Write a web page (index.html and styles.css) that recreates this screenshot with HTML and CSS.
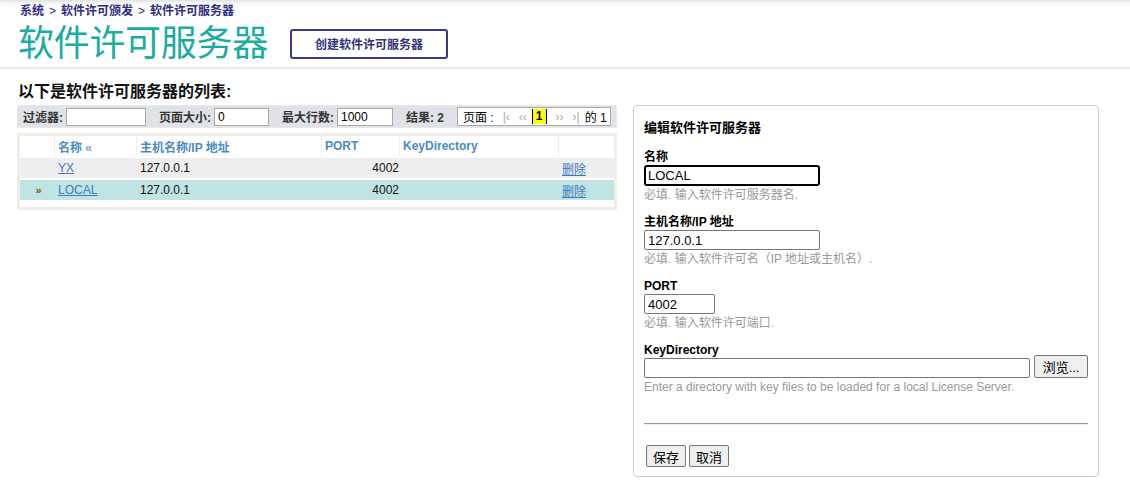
FILE: index.html
```html
<!DOCTYPE html>
<html lang="zh">
<head>
<meta charset="utf-8">
<title>软件许可服务器</title>
<link rel="stylesheet" href="styles.css">
</head>
<body>
<header class="page-header">
  <nav class="crumbs">
    <a href="#">系统</a><span class="sep">&gt;</span><a href="#">软件许可颁发</a><span class="sep">&gt;</span><a href="#">软件许可服务器</a>
  </nav>
  <div class="title-row">
    <h1 class="title">软件许可服务器</h1>
    <button class="create-btn" type="button">创建软件许可服务器</button>
  </div>
</header>

<h2 class="list-title">以下是软件许可服务器的列表:</h2>

<main class="main">
  <section class="list-col">
    <div class="toolbar">
      <label class="tb-label">过滤器:</label><input class="tb-input w80" type="text" value="">
      <label class="tb-label gap">页面大小:</label><input class="tb-input w55" type="text" value="0">
      <label class="tb-label gap">最大行数:</label><input class="tb-input w56" type="text" value="1000">
      <span class="tb-label gap">结果: 2</span>
      <div class="pager">
        <span class="pg-text">页面 :</span>
        <span class="pg-arrow">|‹</span>
        <span class="pg-arrow">‹‹</span>
        <span class="pg-current">1</span>
        <span class="pg-arrow">››</span>
        <span class="pg-arrow">›|</span>
        <span class="pg-text">的 1</span>
      </div>
    </div>

    <div class="table-wrap">
      <table class="grid">
        <colgroup>
          <col class="c-mark"><col class="c-name"><col class="c-host"><col class="c-port"><col class="c-key"><col class="c-del">
        </colgroup>
        <thead>
          <tr>
            <th></th>
            <th>名称 <span class="sort">«</span></th>
            <th>主机名称/IP 地址</th>
            <th>PORT</th>
            <th>KeyDirectory</th>
            <th></th>
          </tr>
        </thead>
        <tbody>
          <tr class="row">
            <td></td>
            <td><a href="#">YX</a></td>
            <td>127.0.0.1</td>
            <td class="num">4002</td>
            <td></td>
            <td><a href="#">删除</a></td>
          </tr>
          <tr class="row selected">
            <td class="mark">»</td>
            <td><a href="#">LOCAL</a></td>
            <td>127.0.0.1</td>
            <td class="num">4002</td>
            <td></td>
            <td><a href="#">删除</a></td>
          </tr>
        </tbody>
      </table>
    </div>
  </section>

  <aside class="panel">
    <h3 class="panel-title">编辑软件许可服务器</h3>

    <div class="field">
      <label class="f-label">名称</label>
      <div class="f-row"><input class="f-input w176 focused" type="text" value="LOCAL"></div>
      <div class="help">必填. 输入软件许可服务器名.</div>
    </div>

    <div class="field">
      <label class="f-label">主机名称/IP 地址</label>
      <div class="f-row"><input class="f-input w176" type="text" value="127.0.0.1"></div>
      <div class="help">必填. 输入软件许可名（IP 地址或主机名）.</div>
    </div>

    <div class="field">
      <label class="f-label">PORT</label>
      <div class="f-row"><input class="f-input w71" type="text" value="4002"></div>
      <div class="help">必填. 输入软件许可端口.</div>
    </div>

    <div class="field">
      <label class="f-label">KeyDirectory</label>
      <div class="f-row"><input class="f-input w386" type="text" value=""><button class="btn browse" type="button">浏览...</button></div>
      <div class="help">Enter a directory with key files to be loaded for a local License Server.</div>
    </div>

    <hr class="divider">

    <div class="actions">
      <button class="btn" type="button">保存</button><button class="btn" type="button">取消</button>
    </div>
  </aside>
</main>
</body>
</html>
```

FILE: styles.css
```css
* { box-sizing: border-box; }

html, body {
  margin: 0;
  padding: 0;
  background: #fff;
  color: #000;
  font-family: "Liberation Sans", Arial, "Noto Sans CJK SC", sans-serif;
  font-size: 12px;
}

.page-header {
  background: linear-gradient(#e2e2e2 0, #f6f6f6 3px, #fff 7px);
  border-bottom: 2px solid #ebebeb;
  padding: 4px 0 0 18px;
  height: 69px;
}

.crumbs {
  padding-left: 2px;
  line-height: 15px;
  font-size: 12px;
  font-weight: bold;
}
.crumbs a { color: #2e2e82; text-decoration: none; }
.crumbs .sep { color: #2e2e82; padding: 0 5px; font-weight: normal; }

.title-row {
  display: flex;
  align-items: center;
  margin-top: 4px;
}

.title {
  margin: 0;
  font-size: 36px;
  font-weight: normal;
  line-height: 42px;
  color: #19aca2;
  letter-spacing: -0.3px;
}

.create-btn {
  margin-left: 22px;
  margin-top: -1px;
  width: 158px;
  height: 30px;
  background: #fff;
  border: 2px solid #3a3a8e;
  border-radius: 3px;
  color: #33337a;
  font-family: inherit;
  font-size: 12px;
  font-weight: bold;
  padding: 0;
}

.list-title {
  margin: 13px 0 0 18px;
  font-size: 16px;
  line-height: 20px;
  font-weight: bold;
  color: #111;
}

.main {
  display: flex;
  align-items: flex-start;
  gap: 16px;
  padding-left: 17px;
  margin-top: 3px;
}

.list-col { width: 600px; }

.toolbar {
  display: flex;
  align-items: center;
  height: 23px;
  background: #dfe2e6;
  border: 1px solid #e6e8eb;
  border-radius: 2px;
  padding-left: 5px;
}

.tb-label {
  font-weight: bold;
  color: #333;
  font-size: 12px;
}
.tb-label.gap { margin-left: 13px; }

.tb-input {
  height: 18px;
  border: 1px solid #a9a9a9;
  background: #fff;
  font-family: inherit;
  font-size: 12px;
  padding: 0 3px;
  margin-left: 3px;
}
.w80 { width: 80px; }
.w55 { width: 55px; }
.w56 { width: 56px; }

.pager {
  display: flex;
  align-items: center;
  height: 19px;
  margin-left: 13px;
  background: #fff;
  border: 1px solid #a9a9a9;
  padding: 0 3px 0 5px;
  font-size: 12px;
}
.pg-text { color: #000; }
.pg-arrow {
  color: #aaa;
  font-size: 12px;
  margin-left: 9px;
}
.pg-current {
  margin-left: 5px;
  background: #ffff00;
  border-left: 1px solid #000;
  border-right: 1px solid #000;
  font-weight: bold;
  padding: 0 3px;
  line-height: 15px;
}
.pg-text:last-child { margin-left: 5px; }

.table-wrap {
  margin-top: 5px;
  border: 3px solid #eeeee6;
  padding: 0 0 5px 0;
}

.grid {
  width: 100%;
  border-collapse: separate;
  border-spacing: 0 2px;
  table-layout: fixed;
  margin-top: -2px;
}
.c-mark { width: 35px; }
.c-name { width: 82px; }
.c-host { width: 185px; }
.c-port { width: 78px; }
.c-key { width: 159px; }
.c-del { width: 55px; }

.grid th {
  text-align: left;
  font-weight: bold;
  color: #4a8ac7;
  height: 20px;
  padding: 0 3px;
  border-right: 1px solid #ececec;
  background: #fff;
}
.grid th:last-child { border-right: 0; }
.grid th .sort { font-weight: normal; }

.grid td {
  height: 20px;
  padding: 0 3px;
  color: #111;
}
.grid .row td { background: #eeeeee; }
.grid .row.selected td { background: #c0e4e4; }
.grid td.num { text-align: right; padding-right: 1px; }
.grid td.mark {
  text-align: center;
  color: #7a5a00;
  font-weight: bold;
  font-size: 11px;
  padding-left: 5px;
}
.grid a { color: #3d7cc0; text-decoration: underline; }

.panel {
  width: 466px;
  height: 372px;
  border: 1px solid #cccccc;
  border-radius: 4px;
  padding: 12px 10px 0 10px;
}

.panel-title {
  margin: 0;
  font-size: 13px;
  line-height: 20px;
  font-weight: bold;
}

.field { margin-top: 11px; }

.f-label {
  display: block;
  font-weight: bold;
  font-size: 12px;
  line-height: 16px;
  color: #000;
}

.f-row {
  display: flex;
  align-items: center;
}

.f-input {
  height: 20px;
  border: 1px solid #767676;
  border-radius: 2px;
  font-family: inherit;
  font-size: 13px;
  padding: 0 3px;
  background: #fff;
  color: #000;
}
.f-input.focused {
  border: 2px solid #000;
  height: 21px;
  padding: 0 2px;
  border-radius: 3px;
}
.w176 { width: 176px; }
.w71 { width: 71px; }
.w386 { width: 387px; }

.help {
  color: #999;
  font-size: 12px;
  line-height: 16px;
  margin-top: 1px;
}

.btn {
  height: 22px;
  border: 1px solid #767676;
  border-radius: 2px;
  background: #efefef;
  font-family: inherit;
  font-size: 13px;
  color: #000;
  padding: 0 6px;
}
.browse {
  margin-left: 4px;
  height: 23px;
  margin-top: -3px;
  width: 54px;
}

.divider {
  margin: 28px 0 0 0;
  border: 0;
  border-top: 1px solid #999;
  border-bottom: 1px solid #eee;
}

.actions {
  display: flex;
  gap: 3px;
  padding-left: 2px;
  margin-top: 20px;
}
```
